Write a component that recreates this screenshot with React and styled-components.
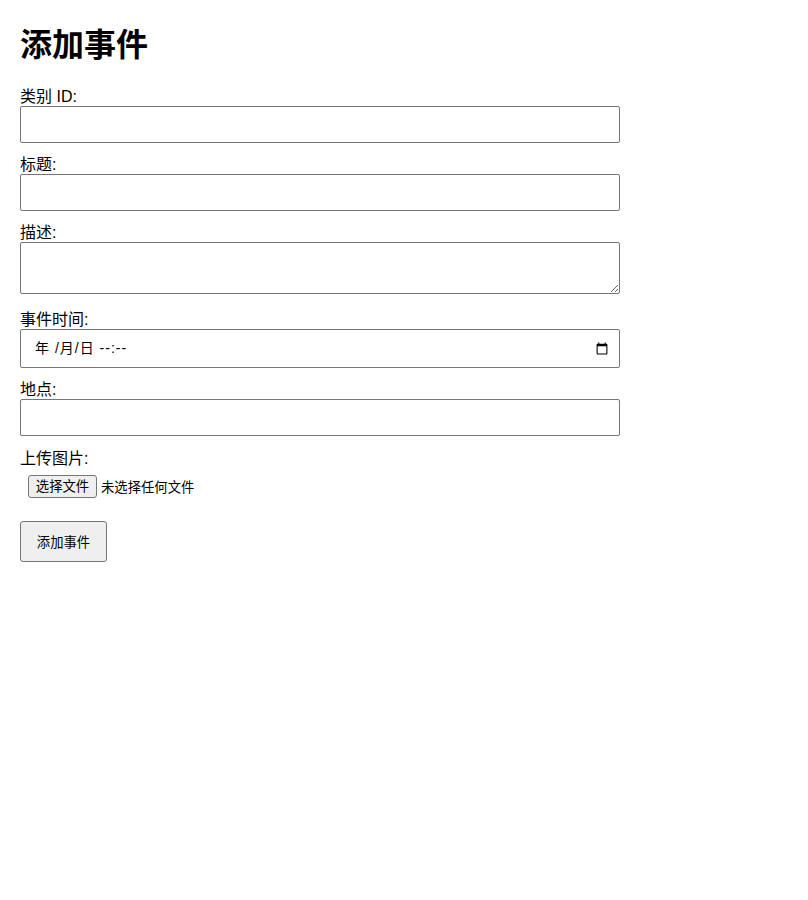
import React, { useState } from 'react';
import styled, { createGlobalStyle } from 'styled-components';

const GlobalStyle = createGlobalStyle`
  body {
    margin: 0;
    padding: 20px;
    background: #fff;
    font-family: "Liberation Sans", Arial, "Noto Sans CJK SC", sans-serif;
  }
`;

const Title = styled.h1`
  margin: 7px 0 24px;
  font-size: 32px;
  line-height: 37px;
  font-weight: 700;
  color: #000;
`;

const Form = styled.form`
  display: block;
  width: 600px;
`;

const Label = styled.label`
  display: block;
  font-size: 16px;
  line-height: 18px;
  color: #000;
`;

const FileLabel = styled(Label)`
  line-height: 20px;
  margin-bottom: -2px;
`;

const TextInput = styled.input`
  display: block;
  box-sizing: border-box;
  width: 100%;
  height: 37px;
  margin: 0 0 13px;
  padding: 8px;
  border: 1px solid #767676;
  border-radius: 2px;
  background: #fff;
  font-family: inherit;
  font-size: 14px;
`;

const DateField = styled.div`
  position: relative;
  height: 39px;
  margin: 0 0 13px;
`;

// the browser prints its own locale here, so its text is hidden and the hint sits on top
const DateInput = styled(TextInput)`
  height: 39px;
  margin: 0;
  color: #000;

  &::-webkit-datetime-edit {
    opacity: 0;
  }
`;

const DateHint = styled.span`
  position: absolute;
  left: 15px;
  top: 0;
  font-size: 14px;
  line-height: 39px;
  letter-spacing: 1px;
  white-space: pre;
  color: #000;
  pointer-events: none;
`;

const TextArea = styled.textarea`
  display: block;
  box-sizing: border-box;
  width: 100%;
  height: 52px;
  margin: 0 0 17px;
  padding: 8px;
  border: 1px solid #767676;
  border-radius: 2px;
  font-family: inherit;
  font-size: 14px;
`;

const FileRow = styled.div`
  display: flex;
  align-items: center;
  gap: 4px;
  padding: 8px;
  margin: 0 0 15px;
  font-size: 13.33px;
  color: #000;
`;

const FileButton = styled.label`
  display: block;
  box-sizing: border-box;
  width: 69px;
  height: 23px;
  border: 1px solid #767676;
  border-radius: 3px;
  background: #efefef;
  font-size: 13.33px;
  line-height: 21px;
  text-align: center;
`;

const HiddenFile = styled.input`
  display: none;
`;

const SubmitButton = styled.button`
  display: block;
  box-sizing: border-box;
  width: 87px;
  height: 41px;
  padding: 0;
  border: 1px solid #767676;
  border-radius: 3px;
  background: #efefef;
  color: #000;
  font-family: inherit;
  font-size: 13.33px;
`;

export default function App() {
  const [fileName, setFileName] = useState('未选择任何文件');

  return (
    <>
      <GlobalStyle />
      <Title>添加事件</Title>
      <Form onSubmit={(e) => e.preventDefault()}>
        <Label htmlFor="category">类别 ID:</Label>
        <TextInput id="category" type="text" />
        <Label htmlFor="title">标题:</Label>
        <TextInput id="title" type="text" />
        <Label htmlFor="desc">描述:</Label>
        <TextArea id="desc" />
        <Label htmlFor="time">事件时间:</Label>
        <DateField>
          <DateInput id="time" type="datetime-local" />
          <DateHint>{'年 /月/日 --:--'}</DateHint>
        </DateField>
        <Label htmlFor="place">地点:</Label>
        <TextInput id="place" type="text" />
        <FileLabel htmlFor="image">上传图片:</FileLabel>
        <FileRow>
          <FileButton htmlFor="image">选择文件</FileButton>
          <HiddenFile
            id="image"
            type="file"
            onChange={(e) => setFileName(e.target.files[0]?.name || '未选择任何文件')}
          />
          <span>{fileName}</span>
        </FileRow>
        <SubmitButton type="submit">添加事件</SubmitButton>
      </Form>
    </>
  );
}
